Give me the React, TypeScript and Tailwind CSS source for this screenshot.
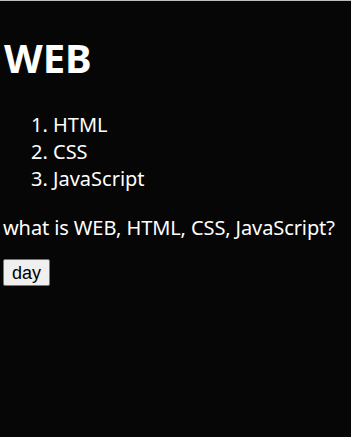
import React from "react";

const App: React.FC = () => {
  return (
    <div
      className="min-h-screen bg-[#060606] border-t border-[#bdbdbd] text-white px-[3px]"
      style={{ fontFamily: '"Noto Sans", "Open Sans", sans-serif' }}
    >
      <h1 className="text-[40px] font-bold leading-[54px] pt-[30px] pl-[1px]">WEB</h1>

      <ol className="list-decimal pl-[50px] mt-[26px] text-[20px] leading-[27px]">
        <li>HTML</li>
        <li>CSS</li>
        <li>JavaScript</li>
      </ol>

      <p className="text-[20px] leading-[27px] mt-[22px] tracking-[-0.1px]">what is WEB, HTML, CSS, JavaScript?</p>

      <button
        className="mt-[18px] px-[8px] h-[27px] text-[18px] leading-none bg-[#efefef] text-black border border-[#767676] rounded-[2px]"
        style={{ fontFamily: '"Liberation Sans", Arial, sans-serif' }}
      >
        day
      </button>
    </div>
  );
};

export default App;
